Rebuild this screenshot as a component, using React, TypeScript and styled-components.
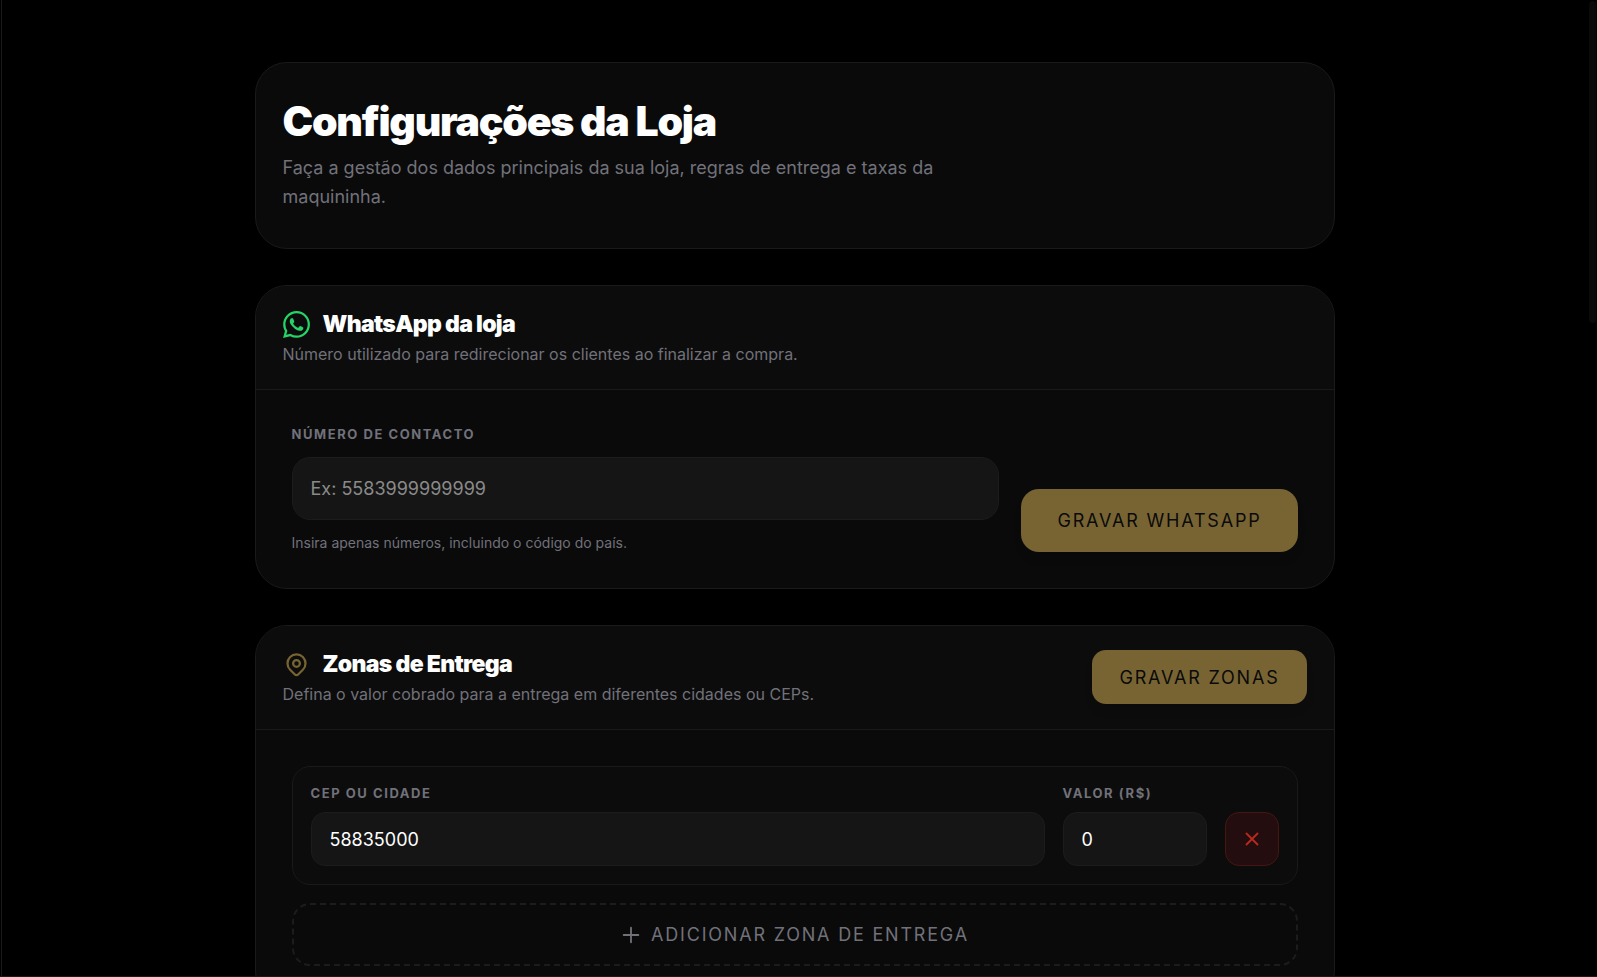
import React, { useState } from "react";
import styled, { createGlobalStyle } from "styled-components";
import { SiWhatsapp } from "react-icons/si";

const GlobalStyle = createGlobalStyle`
  *, *::before, *::after { box-sizing: border-box; }
  body {
    margin: 0;
    background: #000;
    color: #fff;
    font-family: Inter, "Liberation Sans", sans-serif;
    font-size: 18px;
  }
  h1, h2, p { margin: 0; }
  button, input { font-family: inherit; font-size: 18px; }
`;

const Shell = styled.div`
  display: grid;
  grid-template-columns: 2px minmax(0, 1fr);
  height: 100vh;
  border-bottom: 1px solid #1c1a1b;
`;

const Rail = styled.aside`
  border-right: 1px solid #1a1a1a;
`;

const Scroller = styled.main`
  overflow-y: auto;
  scrollbar-width: none;
  padding: 62px 10px 62px 0;
`;

const ScrollThumb = styled.div`
  position: fixed;
  top: 1px;
  right: 1px;
  width: 7px;
  height: 33vh;
  border-radius: 4px;
  background: #0a0a0a;
`;

const Page = styled.div`
  display: flex;
  flex-direction: column;
  gap: 36px;
  width: 100%;
  max-width: 1080px;
  margin: 0 auto;
`;

const Card = styled.section`
  border: 1px solid #1a1a1a;
  border-radius: 32px;
  background: #0a0a0a;
  overflow: hidden;
`;

const Hero = styled(Card)`
  padding: 36px 27px 37px;
`;

const Title = styled.h1`
  margin-bottom: 9px;
  font-size: 41px;
  font-weight: 900;
  line-height: 45px;
  letter-spacing: -0.03em;
`;

const Lead = styled.p`
  max-width: 672px;
  color: #71717a;
  line-height: 29px;
`;

const CardHeader = styled.header`
  display: flex;
  align-items: center;
  justify-content: space-between;
  gap: 18px;
  padding: 22px 27px 23px;
  border-bottom: 1px solid #1a1a1a;
  background: #0c0c0c;
`;

const Heading = styled.h2`
  display: flex;
  align-items: center;
  gap: 13px;
  margin-bottom: 3px;
  font-size: 23px;
  font-weight: 900;
  line-height: 32px;
  letter-spacing: -0.03em;
`;

const Caption = styled.p`
  color: #71717a;
  font-size: 16px;
  line-height: 23px;
`;

const CardBody = styled.div`
  display: flex;
  flex-direction: column;
  gap: 18px;
  padding: 36px;
`;

const ContactForm = styled.form`
  display: flex;
  align-items: flex-end;
  gap: 22px;
`;

const Field = styled.div<{ $width?: number; $gap: number }>`
  display: flex;
  flex-direction: column;
  flex: ${(p) => (p.$width ? `0 0 ${p.$width}px` : "1 1 0")};
  min-width: 0;
  gap: ${(p) => p.$gap}px;
`;

const Label = styled.label`
  color: #71717a;
  font-size: 13px;
  font-weight: 700;
  line-height: 17px;
  letter-spacing: 0.12em;
  text-transform: uppercase;
`;

const TextInput = styled.input<{ $size: "md" | "lg" }>`
  width: 100%;
  height: ${(p) => (p.$size === "lg" ? 63 : 54)}px;
  padding: 0 18px;
  border: 1px solid #1c1c1c;
  border-radius: ${(p) => (p.$size === "lg" ? 18 : 14)}px;
  background: #151515;
  color: #fff;
  outline: none;
  &::placeholder { color: #8a8a8a; opacity: 1; }
`;

const Hint = styled.p`
  color: #71717a;
  font-size: 14px;
  line-height: 18px;
`;

const GoldButton = styled.button<{ $size: "md" | "lg" }>`
  flex: none;
  height: ${(p) => (p.$size === "lg" ? 63 : 54)}px;
  padding: 0 ${(p) => (p.$size === "lg" ? 36 : 27)}px;
  border: 0;
  border-radius: ${(p) => (p.$size === "lg" ? 18 : 14)}px;
  background: #786432;
  color: #0a0a0a;
  letter-spacing: 0.1em;
  text-transform: uppercase;
  box-shadow: 0 8px 12px -4px rgba(0, 0, 0, 0.15);
`;

const ZoneRow = styled.div`
  display: flex;
  align-items: flex-end;
  gap: 18px;
  padding: 18px;
  border: 1px solid #1a1a1a;
  border-radius: 18px;
  background: #0c0c0c;
`;

const RemoveButton = styled.button`
  display: grid;
  place-items: center;
  flex: none;
  width: 54px;
  height: 54px;
  padding: 0;
  border: 1px solid #451712;
  border-radius: 14px;
  background: #240d0e;
  color: #b92a1c;
`;

const AddButton = styled.button`
  display: flex;
  align-items: center;
  justify-content: center;
  gap: 9px;
  height: 63px;
  border: 2px dashed #1c1c1c;
  border-radius: 18px;
  background: transparent;
  color: #71717a;
  letter-spacing: 0.1em;
  text-transform: uppercase;
`;

const ICONS = {
  pin: [
    "M17.657 16.657L13.414 20.9a1.998 1.998 0 01-2.827 0l-4.244-4.243a8 8 0 1111.314 0z",
    "M15 11a3 3 0 11-6 0 3 3 0 016 0z",
  ],
  plus: ["M12 4v16m8-8H4"],
  cross: ["M6 18L18 6M6 6l12 12"],
};

function OutlineIcon({ name, size, color = "currentColor" }: { name: keyof typeof ICONS; size: number; color?: string }) {
  return (
    <svg
      width={size}
      height={size}
      viewBox="0 0 24 24"
      fill="none"
      stroke={color}
      strokeWidth={2}
      strokeLinecap="round"
      strokeLinejoin="round"
      aria-hidden="true"
    >
      {ICONS[name].map((d) => (
        <path key={d} d={d} />
      ))}
    </svg>
  );
}

export default function App() {
  const [phone, setPhone] = useState("");
  const [zone, setZone] = useState("58835000");
  const [price, setPrice] = useState("0");

  return (
    <>
      <GlobalStyle />
      <Shell>
        <Rail />
        <Scroller>
          <Page>
            <Hero>
              <Title>Configurações da Loja</Title>
              <Lead>
                Faça a gestão dos dados principais da sua loja, regras de entrega e taxas da maquininha.
              </Lead>
            </Hero>

            <Card>
              <CardHeader>
                <div>
                  <Heading>
                    <SiWhatsapp size={27} color="#25d366" />
                    WhatsApp da loja
                  </Heading>
                  <Caption>Número utilizado para redirecionar os clientes ao finalizar a compra.</Caption>
                </div>
              </CardHeader>
              <CardBody>
                <ContactForm onSubmit={(e) => e.preventDefault()}>
                  <Field $gap={14}>
                    <Label htmlFor="phone">Número de contacto</Label>
                    <TextInput
                      id="phone"
                      $size="lg"
                      placeholder="Ex: 5583999999999"
                      value={phone}
                      onChange={(e) => setPhone(e.target.value)}
                    />
                    <Hint>Insira apenas números, incluindo o código do país.</Hint>
                  </Field>
                  <GoldButton $size="lg" type="submit">Gravar WhatsApp</GoldButton>
                </ContactForm>
              </CardBody>
            </Card>

            <Card>
              <CardHeader>
                <div>
                  <Heading>
                    <OutlineIcon name="pin" size={27} color="#786432" />
                    Zonas de Entrega
                  </Heading>
                  <Caption>Defina o valor cobrado para a entrega em diferentes cidades ou CEPs.</Caption>
                </div>
                <GoldButton $size="md" type="button">Gravar zonas</GoldButton>
              </CardHeader>
              <CardBody>
                <ZoneRow>
                  <Field $gap={10}>
                    <Label htmlFor="zone">CEP ou cidade</Label>
                    <TextInput id="zone" $size="md" value={zone} onChange={(e) => setZone(e.target.value)} />
                  </Field>
                  <Field $gap={10} $width={144}>
                    <Label htmlFor="price">Valor (R$)</Label>
                    <TextInput id="price" $size="md" value={price} onChange={(e) => setPrice(e.target.value)} />
                  </Field>
                  <RemoveButton type="button" aria-label="Remover zona">
                    <OutlineIcon name="cross" size={22} />
                  </RemoveButton>
                </ZoneRow>
                <AddButton type="button">
                  <OutlineIcon name="plus" size={22} />
                  Adicionar zona de entrega
                </AddButton>
              </CardBody>
            </Card>
          </Page>
        </Scroller>
        <ScrollThumb aria-hidden="true" />
      </Shell>
    </>
  );
}
